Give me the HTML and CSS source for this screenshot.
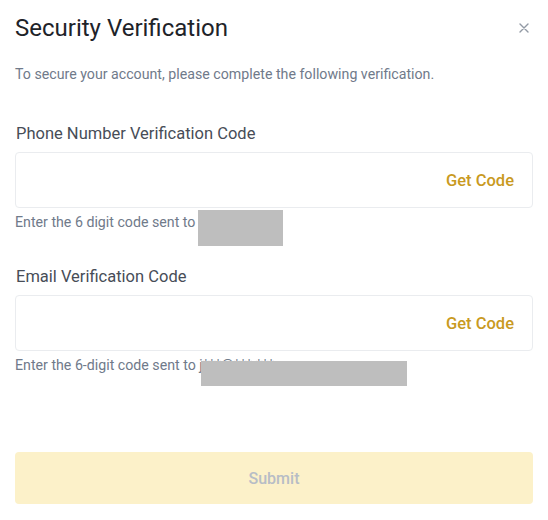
FILE: index.html
```html
<!DOCTYPE html>
<html lang="en">
<head>
<meta charset="utf-8">
<title>Security Verification</title>
<link rel="stylesheet" href="styles.css">
</head>
<body>
<div class="modal">
  <div class="header">
    <h1 class="title">Security Verification</h1>
    <span class="close" aria-label="Close">
      <svg width="10" height="10" viewBox="0 0 10 10"><path d="M1 1L9 9M9 1L1 9" stroke="#929aa5" stroke-width="1.4" stroke-linecap="round" fill="none"/></svg>
    </span>
  </div>
  <p class="subtitle">To secure your account, please complete the following verification.</p>

  <div class="field field-phone">
    <div class="label">Phone Number Verification Code</div>
    <div class="input">
      <span class="get-code">Get Code</span>
    </div>
    <div class="helper">Enter the 6 digit code sent to <span class="redact redact-phone"></span></div>
  </div>

  <div class="field field-email">
    <div class="label">Email Verification Code</div>
    <div class="input">
      <span class="get-code">Get Code</span>
    </div>
    <div class="helper">Enter the 6-digit code sent to j***@***.*** <span class="redact redact-email"></span></div>
  </div>

  <button class="submit" type="button">Submit</button>
</div>
</body>
</html>
```

FILE: styles.css
```css
* { box-sizing: border-box; }
html, body { margin: 0; padding: 0; background: #ffffff; }
body { font-family: Roboto, "Liberation Sans", Arial, sans-serif; }

.modal {
  padding: 12px 15px 0 15px;
}

.header {
  display: flex;
  justify-content: space-between;
  align-items: center;
}

.title {
  margin: 0;
  font-size: 24px;
  line-height: 32px;
  font-weight: 400;
  color: #1e2329;
}

.close {
  display: flex;
  width: 10px;
  height: 10px;
  margin-right: 4px;
}

.subtitle {
  margin: 21px 0 0 0;
  font-size: 14.2px;
  line-height: 18px;
  color: #707a8a;
}

.field-phone { margin-top: 41px; }
.field-email { margin-top: 36px; }

.label {
  font-size: 16.5px;
  line-height: 20px;
  color: #474d57;
  padding-left: 1px;
}

.input {
  margin-top: 8px;
  height: 56px;
  border: 1px solid #eaecef;
  border-radius: 4px;
  display: flex;
  justify-content: flex-end;
  align-items: center;
  padding-right: 18px;
}

.get-code {
  font-size: 16.5px;
  font-weight: 500;
  color: #c99a1f;
}

.helper {
  position: relative;
  margin-top: 5px;
  font-size: 14.2px;
  line-height: 18px;
  color: #707a8a;
  white-space: nowrap;
}

.redact {
  position: absolute;
  background: #bebebe;
}
.redact-phone { left: 183px; top: -3px; width: 85px; height: 36px; }
.redact-email { left: 186px; top: 5px; width: 206px; height: 25px; }

.submit {
  display: flex;
  justify-content: center;
  align-items: center;
  width: 100%;
  height: 52px;
  margin-top: 78px;
  border: none;
  border-radius: 4px;
  background: #fcf1c9;
  color: #b7bdc6;
  font-family: Roboto, "Liberation Sans", Arial, sans-serif;
  font-size: 16px;
  font-weight: 500;
  padding: 0;
}
```
